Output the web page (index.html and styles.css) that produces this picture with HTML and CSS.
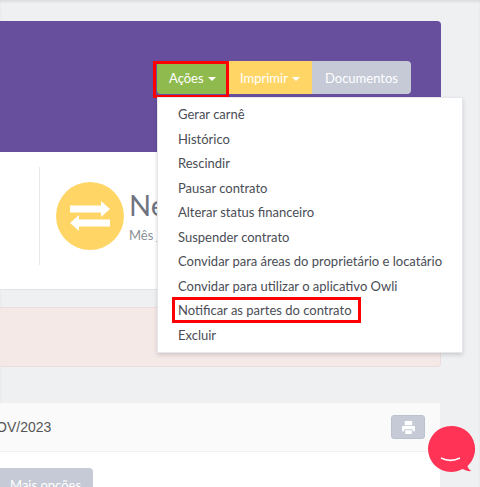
FILE: index.html
```html
<!DOCTYPE html>
<html lang="pt-BR">
<head>
  <meta charset="UTF-8">
  <meta name="viewport" content="width=device-width, initial-scale=1.0">
  <title>Contrato</title>
  <link rel="stylesheet" href="styles.css">
</head>
<body>
  <div class="page">
    <!-- Header -->
    <section class="hero">
      <div class="btn-group">
        <button class="btn btn-green marked" type="button">Ações <span class="caret"></span></button>
        <button class="btn btn-yellow" type="button">Imprimir <span class="caret"></span></button>
        <button class="btn btn-grey" type="button">Documentos</button>
        <ul class="dropdown">
          <li>Gerar carnê</li>
          <li>Histórico</li>
          <li>Rescindir</li>
          <li>Pausar contrato</li>
          <li>Alterar status financeiro</li>
          <li>Suspender contrato</li>
          <li>Convidar para áreas do proprietário e locatário</li>
          <li>Convidar para utilizar o aplicativo Owli</li>
          <li><span class="marked-item">Notificar as partes do contrato</span></li>
          <li>Excluir</li>
        </ul>
      </div>
    </section>

    <!-- Stats -->
    <section class="stats">
      <div class="stat">
        <div class="stat-icon">
          <svg width="40" height="30" viewBox="0 0 40 30" fill="#fff">
            <path d="M0 4.500h31V0l9 8-9 8v-4.500H0z"/>
            <path d="M40 18.500H9V14l-9 8 9 8v-4.500h31z"/>
          </svg>
        </div>
        <div class="stat-text">
          <div class="stat-title">Ne</div>
          <div class="stat-sub">Mês j</div>
        </div>
      </div>
    </section>

    <div class="alert"></div>

    <!-- Parcelas -->
    <section class="panel">
      <div class="panel-head">
        <span class="panel-title">NOV/2023</span>
        <button class="btn-print" type="button">
          <svg width="13" height="13" viewBox="0 0 14 14" fill="#fff">
            <path d="M3 0h8v4.500H3zM1 5.500h12a1 1 0 0 1 1 1V11h-2.500V9h-9v2H0V6.500a1 1 0 0 1 1-1zM3.500 10h7v4h-7z"/>
          </svg>
        </button>
      </div>
      <div class="panel-body">
        <button class="btn btn-grey btn-more" type="button">Mais opções</button>
      </div>
    </section>

    <div class="chat">
      <svg width="50" height="50" viewBox="0 0 50 50">
        <path fill="#ff3355" d="M24 1a23 23 0 1 0 0 46c4 0 8-1 11.500-3 3 1.500 6 2.500 9 2-2-1-3.500-2.500-4-5A23 23 0 0 0 24 1z"/>
        <path fill="none" stroke="#fff" stroke-width="1.500" d="M14 33c6 3 13 3 19 0"/>
      </svg>
    </div>
  </div>
</body>
</html>
```

FILE: styles.css
```css
html, body {
  height: 100%;
}
body {
  margin: 0;
  overflow: hidden;
  background: #eff0f2;
  font: 13px/20px Lato, sans-serif;
  color: #4a4d55;
}
.page {
  position: relative;
  height: 100%;
  padding-top: 21px;
  box-sizing: border-box;
  box-shadow: inset 0 2px 2px rgba(0, 0, 0, .08);
}

/* buttons */
.btn {
  height: 33px;
  padding: 0;
  border: 0;
  font: 13px/20px Lato, sans-serif;
  color: #fff;
}
.btn-green {
  width: 71px;
  background: #8fbb4e;
  border-radius: 4px 0 0 4px;
}
.btn-yellow {
  width: 84px;
  background: #ffd666;
}
.btn-grey {
  width: 99px;
  background: #c5cad6;
  border-radius: 0 4px 4px 0;
}
.caret {
  display: inline-block;
  margin-left: 1px;
  vertical-align: middle;
  border-top: 4px solid #fff;
  border-left: 4px solid transparent;
  border-right: 4px solid transparent;
}
.marked {
  position: relative;
}
.marked::after {
  content: "";
  position: absolute;
  top: 0;
  left: -4px;
  right: -1px;
  bottom: -4px;
  border: 3px solid #f00;
}

/* header */
.hero {
  width: 441px;
  height: 131px;
  box-sizing: border-box;
  padding: 40px 30px 0 0;
  display: flex;
  justify-content: flex-end;
  align-items: flex-start;
  background: #674f9e;
  border-top-right-radius: 4px;
}
.btn-group {
  position: relative;
  display: flex;
}
.dropdown {
  position: absolute;
  z-index: 2;
  top: 36px;
  left: 0;
  width: 306px;
  margin: 0;
  padding: 4px 0 5px;
  box-sizing: border-box;
  list-style: none;
  background: #fff;
  border: 1px solid #e6e7ec;
  box-shadow: 0 2px 4px rgba(0, 0, 0, .15);
}
.dropdown li {
  padding: 0 20px;
  line-height: 24.5px;
  white-space: nowrap;
}
.marked-item {
  display: inline-block;
  margin: 2px 0 0 -3px;
  padding: 0 6px 0 3px;
  line-height: 20px;
  vertical-align: top;
  outline: 3px solid #f00;
}

/* stats */
.stats {
  width: 441px;
  height: 138px;
  box-sizing: border-box;
  padding: 15px 0 0 39px;
  background: #fff;
  border-bottom: 1px solid #e3e4e8;
}
.stat {
  height: 98px;
  box-sizing: border-box;
  padding: 15px 0 0 16px;
  display: flex;
  gap: 5px;
  border-left: 1px solid #e8e9ec;
}
.stat-icon {
  width: 68px;
  height: 68px;
  display: flex;
  justify-content: center;
  align-items: center;
  border-radius: 50%;
  background: #ffd666;
}
.stat-text {
  width: 28px;
  padding-top: 5px;
  white-space: nowrap;
}
.stat-title {
  font-size: 29px;
  line-height: 36px;
  color: #6f7480;
}
.stat-sub {
  margin-top: 3px;
  font-size: 13px;
  line-height: 18px;
  color: #8b8f99;
}

/* alert */
.alert {
  width: 441px;
  height: 60px;
  box-sizing: border-box;
  margin-top: 17px;
  background: #f5e9e8;
  border: 1px solid #efdcdc;
  border-left: 0;
  border-radius: 0 4px 4px 0;
}

/* panel */
.panel {
  width: 440px;
  height: 120px;
  margin-top: 36px;
  background: #fff;
  border-top-right-radius: 4px;
}
.panel-head {
  height: 49px;
  box-sizing: border-box;
  padding: 0 15px 0 0;
  display: flex;
  justify-content: space-between;
  align-items: center;
  background: #fafafa;
  border-bottom: 1px solid #eff0f4;
}
.panel-title {
  margin-left: -14px;
  font: 14px/20px "Liberation Sans", sans-serif;
  color: #555;
}
.btn-print {
  width: 34px;
  height: 24px;
  padding: 0;
  display: flex;
  justify-content: center;
  align-items: center;
  background: #c5cad6;
  border: 1px solid #bcc1ce;
  border-radius: 3px;
}
.panel-body {
  padding-top: 16px;
}
.btn-more {
  display: block;
  width: 93px;
  padding: 0 0 0 10px;
  text-align: left;
  border-radius: 0 4px 4px 0;
}

/* chat bubble */
.chat {
  position: absolute;
  z-index: 3;
  left: 427px;
  top: 425px;
  line-height: 0;
}
```
